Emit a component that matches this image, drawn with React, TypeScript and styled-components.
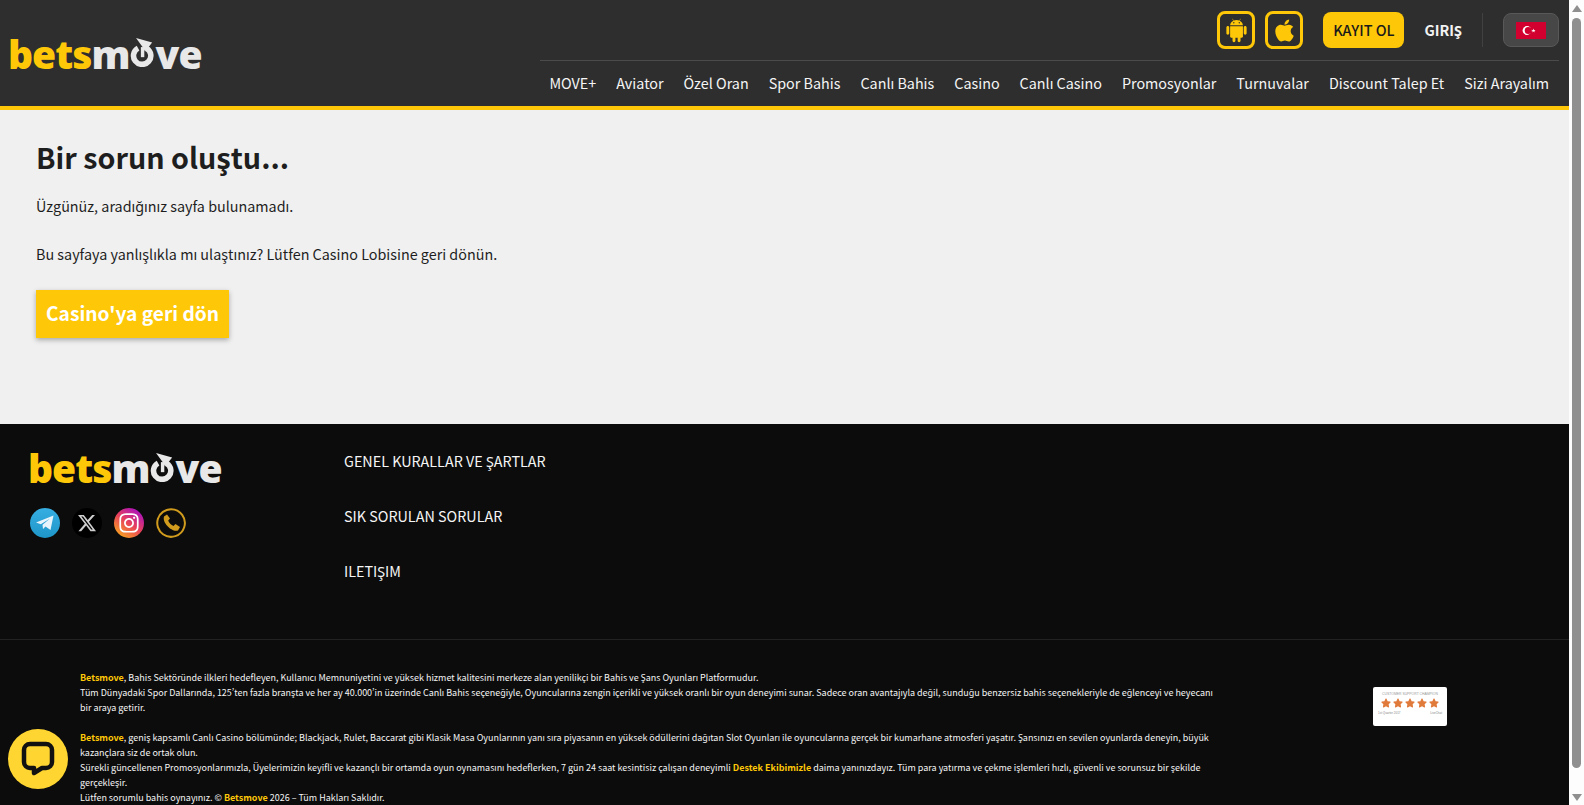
import React from 'react';
import styled, { createGlobalStyle } from 'styled-components';
import { AiFillAndroid, AiFillApple } from 'react-icons/ai';
import { FaStar, FaInstagram } from 'react-icons/fa';
import { FaXTwitter } from 'react-icons/fa6';

const YELLOW = '#fec808';

const GlobalStyle = createGlobalStyle`
  html, body {
    margin: 0;
    padding: 0;
    height: 100%;
    overflow: hidden;
  }

  body {
    font-family: "Noto Sans CJK SC", "Noto Sans", sans-serif;
    background: #f0f0f0;
  }
`;

const Viewport = styled.div`
  display: flex;
  height: 100vh;
  overflow: hidden;
`;

const Page = styled.div`
  flex: 1;
  min-width: 0;
`;

const ScrollTrack = styled.div`
  width: 15px;
  flex: none;
  background: #fdfdfd;
  display: flex;
  flex-direction: column;
  align-items: center;
  padding: 5px 0 4px;
  box-sizing: border-box;
`;

const ScrollArrow = styled.div<{ $down?: boolean }>`
  width: 0;
  height: 0;
  border-left: 5px solid transparent;
  border-right: 5px solid transparent;
  ${(props) =>
    props.$down ? 'border-top: 7px solid #8f8f8f;' : 'border-bottom: 7px solid #8f8f8f;'}
`;

const ScrollThumb = styled.div`
  width: 9px;
  height: 750px;
  margin: 6px 0 26px;
  border-radius: 5px;
  background: #8f8f8f;
`;

const Header = styled.header`
  height: 106px;
  background: #2e2e2e;
  border-bottom: 4px solid ${YELLOW};
  display: flex;
  justify-content: space-between;
  padding: 0 10px;
`;

const LogoText = styled.div<{ $size: number }>`
  display: flex;
  align-items: baseline;
  margin-left: -2px;
  font-family: "Open Sans", sans-serif;
  font-weight: 800;
  font-size: ${(props) => props.$size}px;
  line-height: 1;
  letter-spacing: -0.025em;
  color: #e8e8e8;
`;

const LogoGold = styled.span`
  color: ${YELLOW};
`;

const LogoRing = styled.svg<{ $size: number }>`
  width: ${(props) => props.$size * 0.62}px;
  height: ${(props) => props.$size * 0.75}px;
  margin: 0 1px;
  align-self: flex-end;
  margin-bottom: ${(props) => props.$size * 0.13}px;
`;

const HeaderLogo = styled.div`
  display: flex;
  align-items: center;
  height: 100%;
  box-sizing: border-box;
`;

const HeaderRight = styled.div`
  width: 1019px;
  display: flex;
  flex-direction: column;
`;

const TopRow = styled.div`
  height: 60px;
  border-bottom: 1px solid #4b4b4b;
  display: flex;
  align-items: center;
  justify-content: flex-end;
`;

const AppButton = styled.a`
  width: 38px;
  height: 38px;
  box-sizing: border-box;
  border: 3px solid ${YELLOW};
  border-radius: 8px;
  display: flex;
  align-items: center;
  justify-content: center;
  color: ${YELLOW};
  font-size: 27px;
  margin-right: 10px;
`;

const RegisterButton = styled.a`
  width: 81px;
  height: 36px;
  margin-left: 10px;
  border-radius: 8px;
  background: ${YELLOW};
  color: #1a1a1a;
  font-size: 14.4px;
  font-weight: 500;
  line-height: 36px;
  text-align: center;
`;

const LoginLink = styled.a`
  margin: 0 20px;
  color: #f2f2f2;
  font-size: 14.4px;
  font-weight: 700;
  line-height: 36px;
`;

const VerticalRule = styled.div`
  width: 1px;
  height: 34px;
  background: #414141;
  margin-right: 20px;
`;

const FlagButton = styled.button`
  width: 56px;
  height: 34px;
  padding: 0;
  border: 1px solid #585858;
  border-radius: 8px;
  background: #474747;
  display: flex;
  align-items: center;
  justify-content: center;
`;

const Nav = styled.nav`
  flex: 1;
  display: flex;
  justify-content: flex-end;
  align-items: center;
  padding-bottom: 2px;
`;

const NavItem = styled.a`
  padding: 0 10px;
  color: #f5f5f5;
  font-size: 14.35px;
  line-height: 20px;
  white-space: nowrap;
`;

const Main = styled.main`
  height: 314px;
  box-sizing: border-box;
  background: #f0f0f0;
  padding: 26px 36px 0;
  color: #1e1e1e;
`;

const Title = styled.h1`
  margin: 0 0 16px;
  font-size: 28.7px;
  font-weight: 700;
  line-height: 42px;
`;

const Message = styled.p`
  margin: 0 0 24px;
  font-size: 14.35px;
  line-height: 24px;
`;

const BackButton = styled.a`
  display: inline-block;
  height: 48px;
  padding: 0 10px;
  background: ${YELLOW};
  color: #fff;
  font-size: 19.2px;
  font-weight: 700;
  line-height: 46px;
  box-shadow: 0 2px 5px rgba(0, 0, 0, 0.3);
`;

const Footer = styled.footer`
  background: #0c0c0c;
  color: #f2f2f2;
`;

const FooterTop = styled.div`
  height: 216px;
  box-sizing: border-box;
  border-bottom: 1px solid #222;
  display: flex;
  padding: 24px 0 0 30px;
`;

const Brand = styled.div`
  width: 314px;
`;

const SocialRow = styled.div`
  display: flex;
  gap: 12px;
  margin-top: 21px;
`;

const SocialIcon = styled.a<{ $bg: string }>`
  width: 30px;
  height: 30px;
  border-radius: 50%;
  background: ${(props) => props.$bg};
  display: flex;
  align-items: center;
  justify-content: center;
  color: #fff;
`;

const FooterLinks = styled.div`
  display: flex;
  flex-direction: column;
  gap: 31px;
  padding-top: 1px;
`;

const FooterLink = styled.a`
  color: #f5f5f5;
  font-size: 14.35px;
  line-height: 24px;
`;

const FooterBottom = styled.div`
  display: flex;
  padding: 30px 0 0 80px;
`;

const LegalText = styled.div`
  width: 1140px;
  font-size: 8.97px;
  line-height: 15px;
  color: #f5f5f5;
  font-feature-settings: "pwid" 1;
`;

const LegalParagraph = styled.p`
  margin: 0 0 15px;
`;

const Accent = styled.strong`
  color: ${YELLOW};
  font-weight: 700;
`;

const BadgeColumn = styled.div`
  margin-left: 153px;
  padding-top: 17px;
`;

const Badge = styled.div`
  width: 74px;
  height: 39px;
  box-sizing: border-box;
  padding: 5px 5px 0;
  border-radius: 2px;
  background: #fff;
  display: flex;
  flex-direction: column;
  align-items: center;
`;

const BadgeTitle = styled.div`
  font-family: "Liberation Sans", sans-serif;
  font-size: 3.4px;
  line-height: 4px;
  color: #999;
  white-space: nowrap;
`;

const BadgeStars = styled.div`
  display: flex;
  gap: 2px;
  margin: 2px 0;
  color: #e07b3c;
  font-size: 10px;
  line-height: 0;
`;

const BadgeFoot = styled.div`
  width: 100%;
  display: flex;
  justify-content: space-between;
  font-family: "Liberation Sans", sans-serif;
  font-size: 3px;
  line-height: 6px;
  color: #888;
  white-space: nowrap;
`;

const ChatBubble = styled.button`
  position: fixed;
  left: 8px;
  top: 729px;
  width: 60px;
  height: 60px;
  padding: 0;
  border: none;
  border-radius: 50%;
  background: #ffd631;
  display: flex;
  align-items: center;
  justify-content: center;
`;

const Logo: React.FC<{ size: number }> = function ({ size }) {
  return (
    <LogoText $size={size}>
      <LogoGold>bets</LogoGold>m
      <LogoRing $size={size} viewBox="0 0 24 29">
        <path d="M8 10 A8.6 8.6 0 1 0 16.5 10.2" fill="none" stroke="#e8e8e8" strokeWidth="5.5" />
        <path d="M6 0 L22 4.5 L15 13.5 L12.5 9 Z" fill="#e8e8e8" />
        <path d="M12.5 9 L12.5 19" stroke="#e8e8e8" strokeWidth="3.4" />
      </LogoRing>
      ve
    </LogoText>
  );
};

const navItems = [
  'MOVE+',
  'Aviator',
  'Özel Oran',
  'Spor Bahis',
  'Canlı Bahis',
  'Casino',
  'Canlı Casino',
  'Promosyonlar',
  'Turnuvalar',
  'Discount Talep Et',
  'Sizi Arayalım',
];

const App: React.FC = function () {
  return (
    <Viewport>
      <GlobalStyle />
      <Page>
        <Header>
          <HeaderLogo>
            <Logo size={39} />
          </HeaderLogo>
          <HeaderRight>
            <TopRow>
              <AppButton>
                <AiFillAndroid />
              </AppButton>
              <AppButton>
                <AiFillApple />
              </AppButton>
              <RegisterButton>KAYIT OL</RegisterButton>
              <LoginLink>GIRIŞ</LoginLink>
              <VerticalRule />
              <FlagButton>
                <svg width="30" height="17" viewBox="0 0 30 17">
                  <rect width="30" height="17" fill="#d2002f" />
                  <circle cx="11" cy="8.5" r="4.4" fill="#fff" />
                  <circle cx="12.2" cy="8.5" r="3.5" fill="#d2002f" />
                  <polygon
                    points="17.5,6.6 18,8 19.5,8 18.3,8.9 18.8,10.4 17.5,9.5 16.2,10.4 16.7,8.9 15.5,8 17,8"
                    fill="#fff"
                  />
                </svg>
              </FlagButton>
            </TopRow>
            <Nav>
              {navItems.map((item) => (
                <NavItem key={item}>{item}</NavItem>
              ))}
            </Nav>
          </HeaderRight>
        </Header>

        <Main>
          <Title>Bir sorun oluştu...</Title>
          <Message>Üzgünüz, aradığınız sayfa bulunamadı.</Message>
          <Message>Bu sayfaya yanlışlıkla mı ulaştınız? Lütfen Casino Lobisine geri dönün.</Message>
          <BackButton>Casino'ya geri dön</BackButton>
        </Main>

        <Footer>
          <FooterTop>
            <Brand>
              <Logo size={39} />
              <SocialRow>
                <SocialIcon $bg="linear-gradient(180deg, #37aee2, #1e96c8)">
                  <svg width="20" height="18" viewBox="0 0 20 18">
                    <path d="M1 8.5 L18.5 1.5 L15.5 16 L10.5 12.5 L8 15 L7.5 10.8 L15 4.5 L5.8 10.3 Z" fill="#e8f4fb" />
                  </svg>
                </SocialIcon>
                <SocialIcon $bg="#000">
                  <FaXTwitter size={20} color="#cfcfcf" />
                </SocialIcon>
                <SocialIcon $bg="linear-gradient(35deg, #f9a61f 10%, #e8415a 50%, #a80fc4 90%)">
                  <FaInstagram size={22} />
                </SocialIcon>
                <SocialIcon $bg="transparent">
                  <svg width="30" height="30" viewBox="0 0 30 30">
                    <path
                      d="M15 1.2 A13.8 13.8 0 1 1 7 26.2 M7 26.2 A13.8 13.8 0 0 1 15 1.2"
                      fill="none"
                      stroke="#d19c1d"
                      strokeWidth="2"
                    />
                    <path
                      d="M8 8.5 L11 6.5 L14 10.5 L12.2 12.5 C13 15 15 17 17.5 18 L19.5 16 L24 19 L22 22.5 C16 24.5 6 15 8 8.5 Z"
                      fill="#d19c1d"
                    />
                  </svg>
                </SocialIcon>
              </SocialRow>
            </Brand>
            <FooterLinks>
              <FooterLink>GENEL KURALLAR VE ŞARTLAR</FooterLink>
              <FooterLink>SIK SORULAN SORULAR</FooterLink>
              <FooterLink>ILETIŞIM</FooterLink>
            </FooterLinks>
          </FooterTop>
          <FooterBottom>
            <LegalText>
              <LegalParagraph>
                <Accent>Betsmove</Accent>, Bahis Sektöründe ilkleri hedefleyen, Kullanıcı Memnuniyetini ve
                yüksek hizmet kalitesini merkeze alan yenilikçi bir Bahis ve Şans Oyunları Platformudur.
                <br />
                Tüm Dünyadaki Spor Dallarında, 125’ten fazla branşta ve her ay 40.000’in üzerinde Canlı Bahis
                seçeneğiyle, Oyuncularına zengin içerikli ve yüksek oranlı bir oyun deneyimi sunar. Sadece
                oran avantajıyla değil, sunduğu benzersiz bahis seçenekleriyle de eğlenceyi ve heyecanı bir
                araya getirir.
              </LegalParagraph>
              <LegalParagraph>
                <Accent>Betsmove</Accent>, geniş kapsamlı Canlı Casino bölümünde; Blackjack, Rulet, Baccarat
                gibi Klasik Masa Oyunlarının yanı sıra piyasanın en yüksek ödüllerini dağıtan Slot Oyunları
                ile oyuncularına gerçek bir kumarhane atmosferi yaşatır. Şansınızı en sevilen oyunlarda
                deneyin, büyük kazançlara siz de ortak olun.
                <br />
                Sürekli güncellenen Promosyonlarımızla, Üyelerimizin keyifli ve kazançlı bir ortamda oyun
                oynamasını hedeflerken, 7 gün 24 saat kesintisiz çalışan deneyimli{' '}
                <Accent>Destek Ekibimizle</Accent> daima yanınızdayız. Tüm para yatırma ve çekme işlemleri
                hızlı, güvenli ve sorunsuz bir şekilde gerçekleşir.
                <br />
                Lütfen sorumlu bahis oynayınız. © <Accent>Betsmove</Accent> 2026 – Tüm Hakları Saklıdır.
              </LegalParagraph>
            </LegalText>
            <BadgeColumn>
              <Badge>
                <BadgeTitle>CUSTOMER SUPPORT CHAMPION</BadgeTitle>
                <BadgeStars>
                  <FaStar />
                  <FaStar />
                  <FaStar />
                  <FaStar />
                  <FaStar />
                </BadgeStars>
                <BadgeFoot>
                  <span>1st Quarter 2017</span>
                  <span>LiveChat</span>
                </BadgeFoot>
              </Badge>
            </BadgeColumn>
          </FooterBottom>
        </Footer>
      </Page>

      <ScrollTrack>
        <ScrollArrow />
        <ScrollThumb />
        <ScrollArrow $down />
      </ScrollTrack>

      <ChatBubble>
        <svg width="34" height="36" viewBox="0 0 34 36">
          <path
            d="M9 3 H25 A6 6 0 0 1 31 9 V21 A6 6 0 0 1 25 27 H21 L13 32 V27 H9 A6 6 0 0 1 3 21 V9 A6 6 0 0 1 9 3 Z"
            fill="#ffd631"
            stroke="#111"
            strokeWidth="4.5"
            strokeLinejoin="round"
          />
        </svg>
      </ChatBubble>
    </Viewport>
  );
};

export default App;
